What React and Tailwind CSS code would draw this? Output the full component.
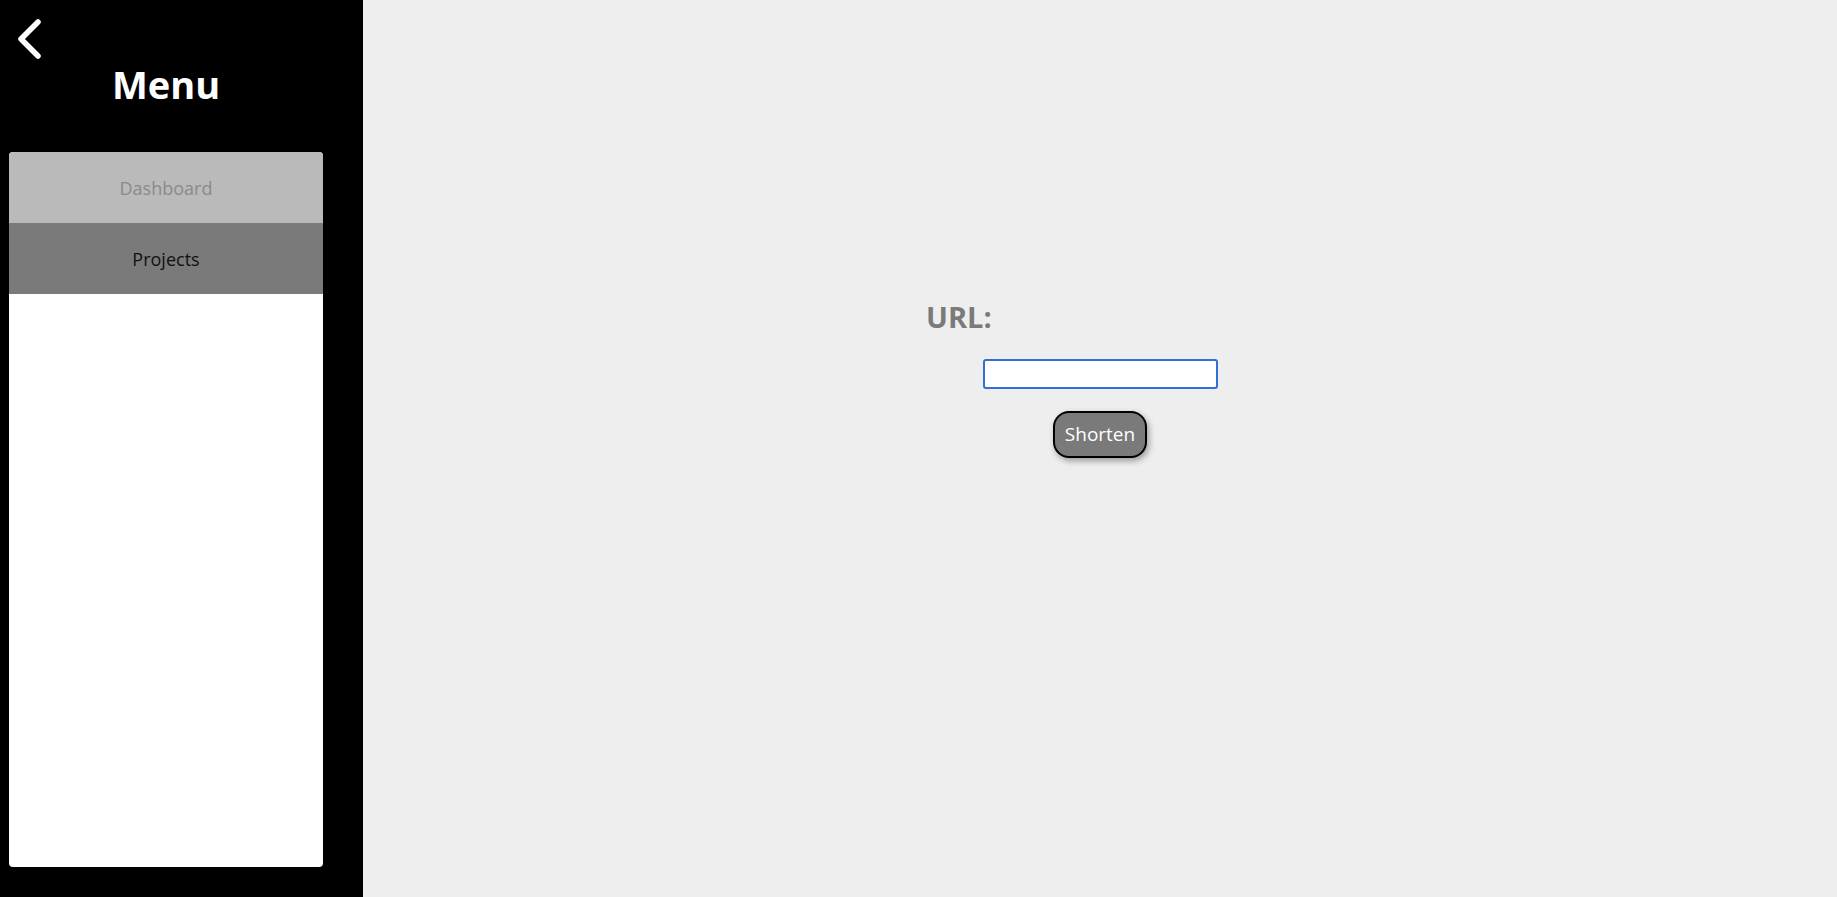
export default function App() {
  return (
    <div className="flex h-[897px] w-full" style={{ fontFamily: '"Open Sans", "Noto Sans", sans-serif' }}>
      <aside className="w-[363px] shrink-0 bg-black flex flex-col">
        <div className="h-[152px] relative">
          <svg className="absolute left-[15px] top-[18px]" width="28" height="42" viewBox="0 0 28 42" fill="none">
            <path d="M23 4 L6 21 L23 38" stroke="white" strokeWidth="5.5" strokeLinecap="round" strokeLinejoin="round" />
          </svg>
          <h1 className="ml-[9px] w-[314px] pt-[59px] text-center text-[38px] leading-[50px] font-bold text-white">Menu</h1>
        </div>
        <div className="ml-[9px] w-[314px] h-[715px] bg-white rounded-[4px] overflow-hidden">
          <div className="h-[71px] pt-[1px] bg-[#bababa] flex items-center justify-center text-[18px] text-[#8a8a8a]">Dashboard</div>
          <div className="h-[71px] pt-[1px] bg-[#7a7a7a] flex items-center justify-center text-[18px] text-[#111]">Projects</div>
        </div>
      </aside>
      <main className="flex-1 bg-[#eeeeee] flex justify-center">
        <div className="w-[344px] pt-[297px] flex flex-col">
          <label className="-ml-[2px] text-[29px] font-bold text-[#7a7a7a] leading-[40px]">URL:</label>
          <div className="flex justify-center mt-[22px]">
            <input className="w-[235px] h-[30px] bg-white rounded-[3px] border-2 border-[#2f6fd6] outline-none" />
          </div>
          <div className="flex justify-center mt-[22px]">
            <button className="w-[94px] h-[47px] rounded-[16px] border-2 border-black bg-[#7a7a7a] text-white text-[19px] shadow-[2px_3px_6px_rgba(0,0,0,0.35)]">Shorten</button>
          </div>
        </div>
      </main>
    </div>
  );
}
